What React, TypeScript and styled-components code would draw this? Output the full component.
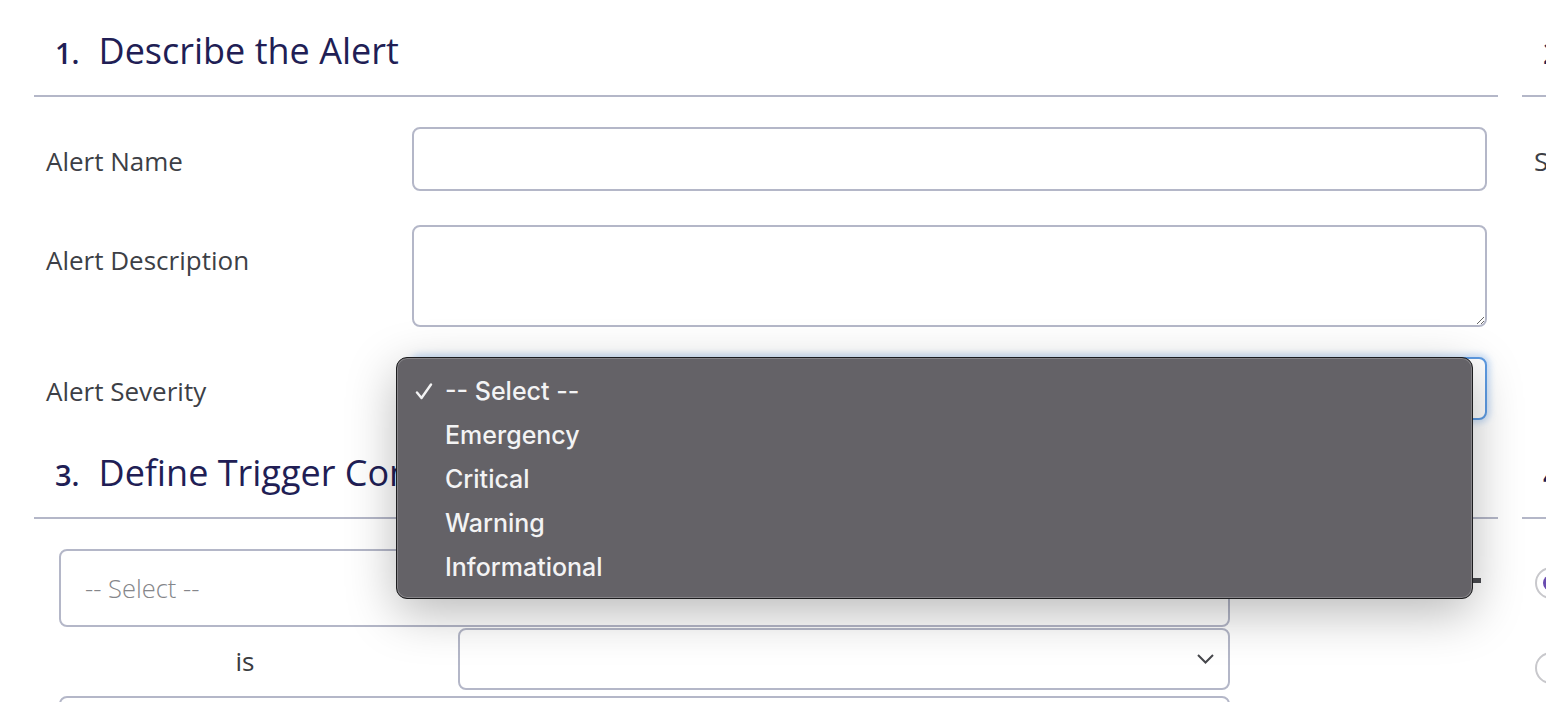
import React from 'react'
import styled, { createGlobalStyle } from 'styled-components'

const GlobalStyle = createGlobalStyle`
  html, body {
    margin: 0;
    width: 1546px;
    height: 702px;
    overflow: hidden;
    background: #fff;
    font-family: 'Open Sans', 'Liberation Sans', sans-serif;
  }
`

const Page = styled.div`
  display: grid;
  grid-template-columns: 1464px 1464px;
  column-gap: 24px;
  padding-left: 34px;
  width: max-content;
`

const Section = styled.section`
  display: flex;
  flex-direction: column;
`

const SectionTitle = styled.h2`
  margin: 0;
  height: 97px;
  box-sizing: border-box;
  padding: 26px 0 0 21px;
  line-height: 50px;
  font-size: 36px;
  font-weight: 400;
  color: #211e55;
  border-bottom: 2px solid #b4b7c8;
  white-space: nowrap;
`

const StepNum = styled.span`
  font-size: 29px;
  font-weight: 600;
  margin-right: 19px;
`

const Fields = styled.div`
  padding: 30px 11px 0 12px;
`

const FieldRow = styled.div<{ $space: number }>`
  display: grid;
  grid-template-columns: 366px 1fr;
  margin-bottom: ${p => p.$space}px;
`

const Label = styled.label<{ $top?: boolean }>`
  font-size: 26px;
  line-height: 36px;
  color: #3d3f46;
  white-space: nowrap;
  align-self: ${p => (p.$top ? 'start' : 'center')};
  padding-top: ${p => (p.$top ? 17 : 4)}px;
`

const TextInput = styled.input`
  height: 64px;
  box-sizing: border-box;
  border: 2px solid #b4b7c8;
  border-radius: 8px;
  font: inherit;
  font-size: 24px;
  padding: 0 20px;
  outline: none;
`

const TextArea = styled.textarea`
  height: 102px;
  box-sizing: border-box;
  border: 2px solid #b4b7c8;
  border-radius: 8px;
  font: inherit;
  font-size: 24px;
  padding: 12px 20px;
  resize: vertical;
  outline: none;
  display: block;
`

const SelectWrap = styled.div`
  position: relative;
`

const SelectBox = styled.div<{ $h: number; $focused?: boolean }>`
  height: ${p => p.$h}px;
  box-sizing: border-box;
  border: 2px solid ${p => (p.$focused ? '#5d9be3' : '#b4b7c8')};
  border-radius: 8px;
  box-shadow: ${p => (p.$focused ? '0 0 6px 3px rgba(110, 165, 235, 0.35)' : 'none')};
  display: flex;
  align-items: center;
  justify-content: space-between;
  padding: 0 14px 0 24px;
  background: #fff;
`

const Placeholder = styled.span`
  font-size: 25.5px;
  font-weight: 300;
  color: #85868a;
`

const Chevron = () => (
  <svg width="17" height="10" viewBox="0 0 17 10">
    <polyline points="1,1 8.5,8.5 16,1" fill="none" stroke="#46474c" strokeWidth="2" />
  </svg>
)

const Popup = styled.ul`
  position: absolute;
  z-index: 10;
  left: -16px;
  top: 0;
  width: calc(100% + 2px);
  box-sizing: border-box;
  margin: 0;
  padding: 11px 0 9px;
  list-style: none;
  background: #646267;
  border: 1px solid #1d1d1f;
  border-radius: 11px;
  box-shadow: inset 0 0 0 1px rgba(255, 255, 255, 0.22), 0 14px 50px rgba(0, 0, 0, 0.28);
  font-family: Inter, 'Liberation Sans', sans-serif;
`

const PopupItem = styled.li`
  position: relative;
  height: 44px;
  line-height: 44px;
  padding-left: 48px;
  font-size: 25px;
  font-weight: 500;
  color: #f3f3f4;
`

const CheckMark = styled.svg`
  position: absolute;
  left: 18px;
  top: 14px;
`

const TriggerBody = styled.div`
  display: grid;
  grid-template-columns: 1171px 1fr;
  padding: 30px 0 0 25px;
`

const Stack = styled.div`
  display: flex;
  flex-direction: column;
`

const OperatorRow = styled.div`
  display: grid;
  grid-template-columns: 372px 1fr;
  column-gap: 27px;
  align-items: center;
  margin-top: 1px;
`

const OperatorLabel = styled.span`
  text-align: center;
  font-size: 26px;
  color: #3a3b40;
  padding-top: 4px;
`

const NextField = styled.div`
  margin-top: 6px;
  height: 60px;
  border: 2px solid #b4b7c8;
  border-radius: 8px;
`

const RemoveButton = styled.div`
  justify-self: end;
  margin: 29px 17px 0 0;
  width: 30px;
  height: 5px;
  background: #4a4b50;
`

const Radios = styled.div`
  display: flex;
  flex-direction: column;
  gap: 49px;
  padding: 46px 0 0 13px;
`

const RadioRow = styled.div`
  display: flex;
  align-items: center;
  gap: 16px;
  font-size: 26px;
  color: #3d3f46;
  white-space: nowrap;
`

const RadioCircle = styled.span<{ $on?: boolean }>`
  width: 32px;
  height: 32px;
  box-sizing: border-box;
  border: 2px solid #c8c8cc;
  border-radius: 50%;
  display: flex;
  align-items: center;
  justify-content: center;
  &::after {
    content: '';
    width: 16px;
    height: 16px;
    border-radius: 50%;
    background: ${p => (p.$on ? '#6a4cb0' : 'transparent')};
  }
`

const severities = ['-- Select --', 'Emergency', 'Critical', 'Warning', 'Informational']

export default function App() {
  return (
    <>
      <GlobalStyle />
      <Page>
        <Section>
          <SectionTitle><StepNum>1.</StepNum>Describe the Alert</SectionTitle>
          <Fields>
            <FieldRow $space={34}>
              <Label>Alert Name</Label>
              <TextInput />
            </FieldRow>
            <FieldRow $space={30}>
              <Label $top>Alert Description</Label>
              <TextArea />
            </FieldRow>
            <FieldRow $space={2}>
              <Label>Alert Severity</Label>
              <SelectWrap>
                <SelectBox $h={63} $focused>
                  <Placeholder>-- Select --</Placeholder>
                  <Chevron />
                </SelectBox>
                <Popup>
                  {severities.map((s, i) => (
                    <PopupItem key={s}>
                      {i === 0 && (
                        <CheckMark width="18" height="17" viewBox="0 0 18 17">
                          <path d="M2 9.5 L6.5 15 L16 1.5" fill="none" stroke="#f3f3f4" strokeWidth="2.4" strokeLinecap="round" strokeLinejoin="round" />
                        </CheckMark>
                      )}
                      {s}
                    </PopupItem>
                  ))}
                </Popup>
              </SelectWrap>
            </FieldRow>
          </Fields>
        </Section>

        <Section>
          <SectionTitle><StepNum>2.</StepNum>Send Notifications</SectionTitle>
          <Fields>
            <FieldRow $space={34}>
              <Label>Send To</Label>
              <TextInput />
            </FieldRow>
          </Fields>
        </Section>

        <Section>
          <SectionTitle><StepNum>3.</StepNum>Define Trigger Conditions</SectionTitle>
          <TriggerBody>
            <Stack>
              <SelectBox $h={78}>
                <Placeholder>-- Select --</Placeholder>
                <Chevron />
              </SelectBox>
              <OperatorRow>
                <OperatorLabel>is</OperatorLabel>
                <SelectBox $h={62}>
                  <span />
                  <Chevron />
                </SelectBox>
              </OperatorRow>
              <NextField />
            </Stack>
            <RemoveButton />
          </TriggerBody>
        </Section>

        <Section>
          <SectionTitle><StepNum>4.</StepNum>Schedule</SectionTitle>
          <Radios>
            <RadioRow><RadioCircle $on />Always</RadioRow>
            <RadioRow><RadioCircle />Custom schedule</RadioRow>
          </Radios>
        </Section>
      </Page>
    </>
  )
}
